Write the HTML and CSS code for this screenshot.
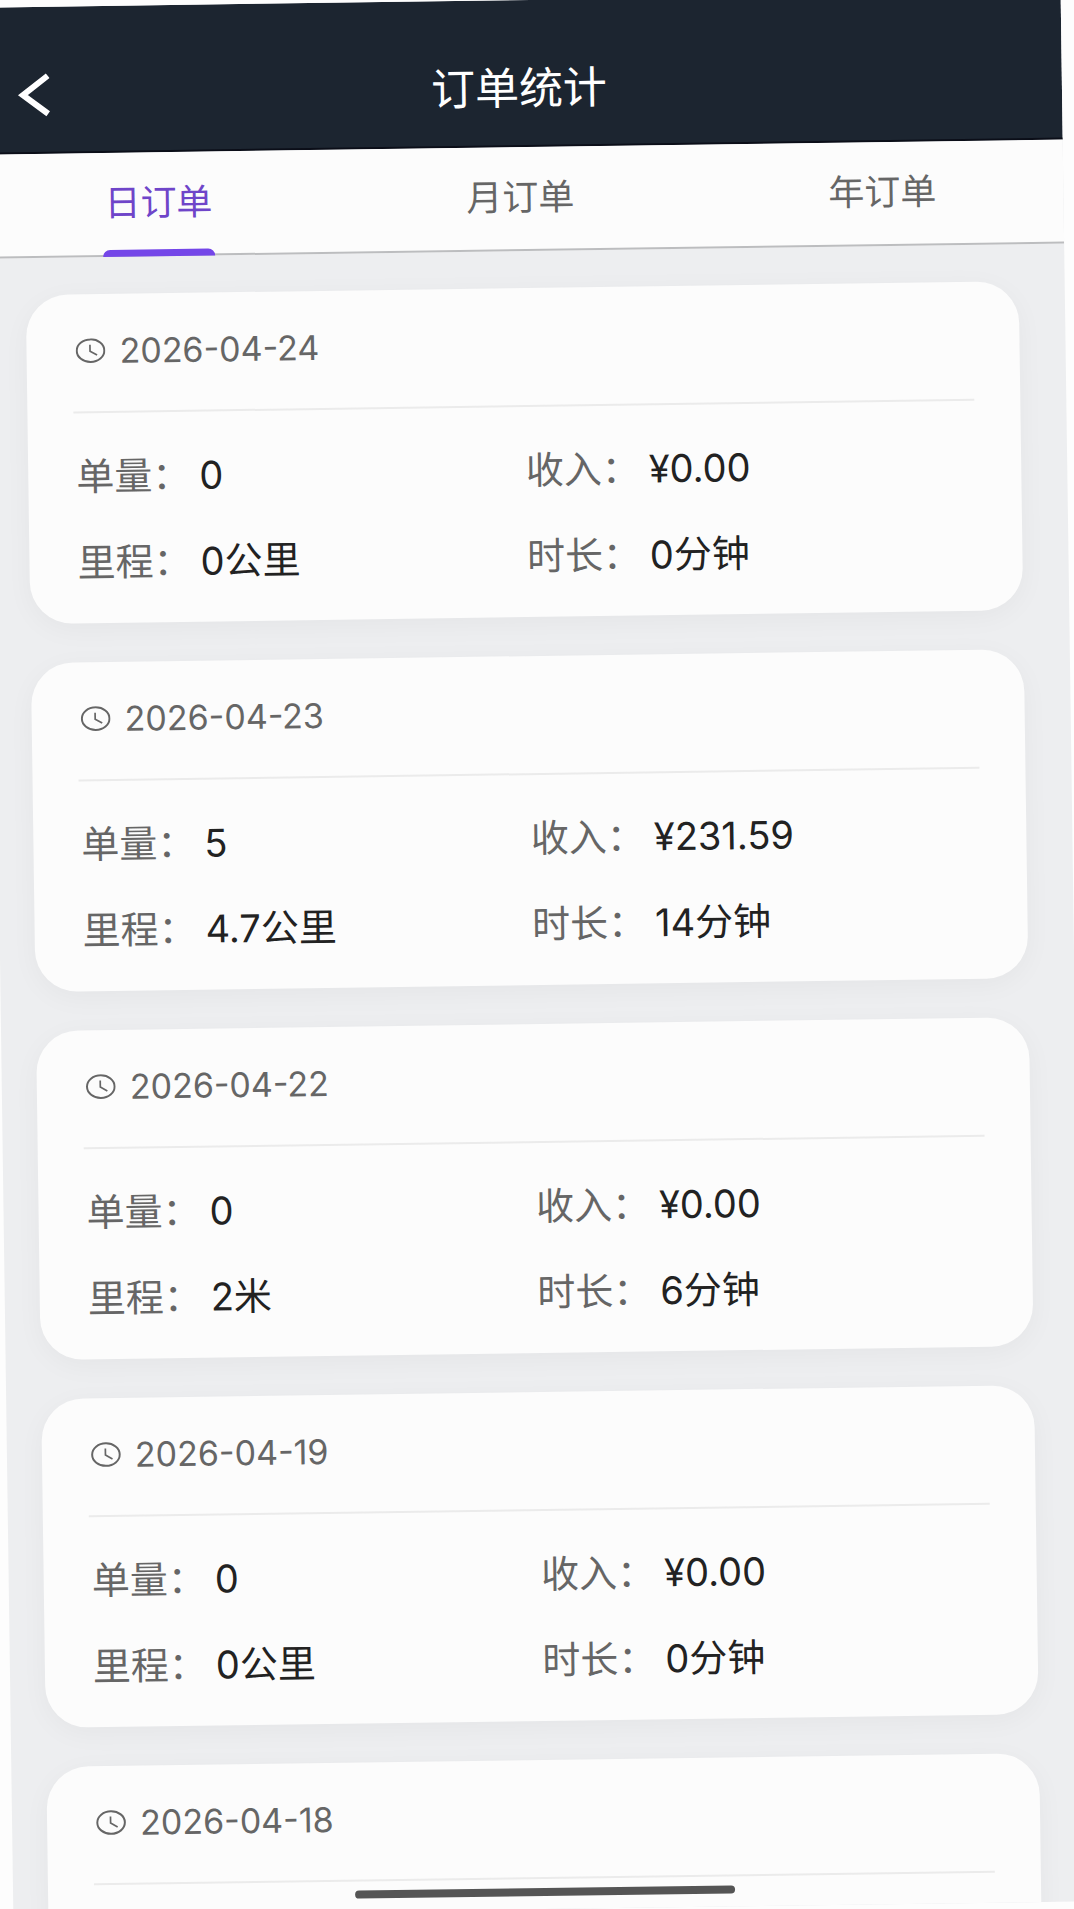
FILE: index.html
```html
<!DOCTYPE html>
<html lang="zh-CN">
<head>
<meta charset="utf-8">
<meta name="viewport" content="width=device-width, initial-scale=1">
<title>订单统计</title>
<link rel="stylesheet" href="styles.css">
</head>
<body>
<svg class="symbols" aria-hidden="true">
  <symbol id="clock" viewBox="0 0 30 25">
    <ellipse cx="15" cy="12.500" rx="13.800" ry="11.300" fill="none" stroke="currentColor" stroke-width="2"/>
    <path d="M14.500 6.500V13L21.500 17" fill="none" stroke="currentColor" stroke-width="1.700"/>
  </symbol>
</svg>
<div class="screen">
  <header class="header">
    <button class="back" type="button" aria-label="返回">
      <svg viewBox="0 0 32 44" width="32" height="44" aria-hidden="true"><path d="M30 3L5 22L30 41" fill="none" stroke="#fff" stroke-width="6"/></svg>
    </button>
    <h1 class="title">订单统计</h1>
  </header>
  <nav class="tabs">
    <button class="tab tab-active" type="button">日订单</button>
    <button class="tab" type="button">月订单</button>
    <button class="tab" type="button">年订单</button>
  </nav>
  <main class="list">
    <article class="card">
      <h2 class="date"><svg class="clock"><use href="#clock"/></svg>2026-04-24</h2>
      <dl class="stats">
        <div class="stat"><dt>单量：</dt><dd>0</dd></div>
        <div class="stat"><dt>收入：</dt><dd>¥0.00</dd></div>
        <div class="stat"><dt>里程：</dt><dd>0公里</dd></div>
        <div class="stat"><dt>时长：</dt><dd>0分钟</dd></div>
      </dl>
    </article>
    <article class="card">
      <h2 class="date"><svg class="clock"><use href="#clock"/></svg>2026-04-23</h2>
      <dl class="stats">
        <div class="stat"><dt>单量：</dt><dd>5</dd></div>
        <div class="stat"><dt>收入：</dt><dd>¥231.59</dd></div>
        <div class="stat"><dt>里程：</dt><dd>4.7公里</dd></div>
        <div class="stat"><dt>时长：</dt><dd>14分钟</dd></div>
      </dl>
    </article>
    <article class="card">
      <h2 class="date"><svg class="clock"><use href="#clock"/></svg>2026-04-22</h2>
      <dl class="stats">
        <div class="stat"><dt>单量：</dt><dd>0</dd></div>
        <div class="stat"><dt>收入：</dt><dd>¥0.00</dd></div>
        <div class="stat"><dt>里程：</dt><dd>2米</dd></div>
        <div class="stat"><dt>时长：</dt><dd>6分钟</dd></div>
      </dl>
    </article>
    <article class="card">
      <h2 class="date"><svg class="clock"><use href="#clock"/></svg>2026-04-19</h2>
      <dl class="stats">
        <div class="stat"><dt>单量：</dt><dd>0</dd></div>
        <div class="stat"><dt>收入：</dt><dd>¥0.00</dd></div>
        <div class="stat"><dt>里程：</dt><dd>0公里</dd></div>
        <div class="stat"><dt>时长：</dt><dd>0分钟</dd></div>
      </dl>
    </article>
    <article class="card">
      <h2 class="date"><svg class="clock"><use href="#clock"/></svg>2026-04-18</h2>
    </article>
  </main>
  <div class="home-bar"></div>
</div>
</body>
</html>
```
FILE: styles.css
```css
* {
  box-sizing: border-box;
}

body {
  margin: 0;
  height: 100vh;
  overflow: hidden;
  background: #fdfdfd;
  font-family: Inter, "Noto Sans CJK SC", sans-serif;
}

button {
  margin: 0;
  padding: 0;
  border: 0;
  background: none;
  font: inherit;
  color: inherit;
}

.symbols {
  position: absolute;
  width: 0;
  height: 0;
}

/* The whole screen is tilted slightly around its centre. */
.screen {
  position: relative;
  display: flex;
  flex-direction: column;
  height: 100vh;
  overflow: hidden;
  background: #edeef0;
  transform: rotate(-0.8deg);
}

.header {
  display: grid;
  grid-template-columns: 32px 1fr 32px;
  align-items: center;
  flex: none;
  height: 147px;
  padding: 30px 42px 0 30px;
  border-bottom: 2px solid #0b0e18;
  background: #1c2530;
  color: #fff;
}

.back {
  display: flex;
}

.title {
  margin: 0;
  font-size: 44px;
  font-weight: 400;
  line-height: 56px;
  text-align: center;
}

.tabs {
  display: grid;
  grid-template-columns: repeat(3, 1fr);
  flex: none;
  height: 104px;
  margin-left: -12px;
  border-bottom: 2px solid #bcbdbf;
  background: #fcfcfc;
  color: #666;
  font-size: 36px;
}

.tab {
  position: relative;
  padding-bottom: 8px;
}

.tab-active {
  color: #6f45c9;
}

.tab-active::after {
  content: "";
  position: absolute;
  bottom: -2px;
  left: calc(50% - 56px);
  width: 112px;
  height: 7px;
  border-radius: 8px 8px 0 0;
  background: #7446e8;
}

.list {
  display: flex;
  flex-direction: column;
  gap: 39px;
  flex: 1;
  min-height: 0;
  padding: 37px 46px 0 35px;
  overflow: hidden;
}

.card {
  flex: none;
  min-height: 329px;
  padding: 0 46px 18px;
  border-radius: 42px;
  background: #fcfcfc;
  box-shadow: 0 6px 28px rgba(0, 0, 0, 0.04);
}

.date {
  display: flex;
  align-items: center;
  gap: 14px;
  height: 119px;
  margin: 0;
  padding: 0 3px 4px;
  border-bottom: 2px solid #ebebeb;
  color: #666;
  font-size: 34px;
  font-weight: 400;
}

.clock {
  width: 30px;
  height: 25px;
}

.stats {
  display: grid;
  grid-template-columns: 1fr 1fr;
  margin: 0;
  padding: 20px 0 0 2px;
}

.stat {
  display: grid;
  grid-template-columns: 123px 1fr;
  align-items: center;
  height: 86px;
  font-size: 38px;
  line-height: 48px;
}

.stat dt {
  color: #666;
}

.stat dd {
  margin: 0;
  color: #222;
}

.home-bar {
  position: absolute;
  bottom: 13px;
  left: calc(50% - 195px);
  width: 380px;
  height: 8px;
  border-radius: 4px;
  background: #555;
}
```
